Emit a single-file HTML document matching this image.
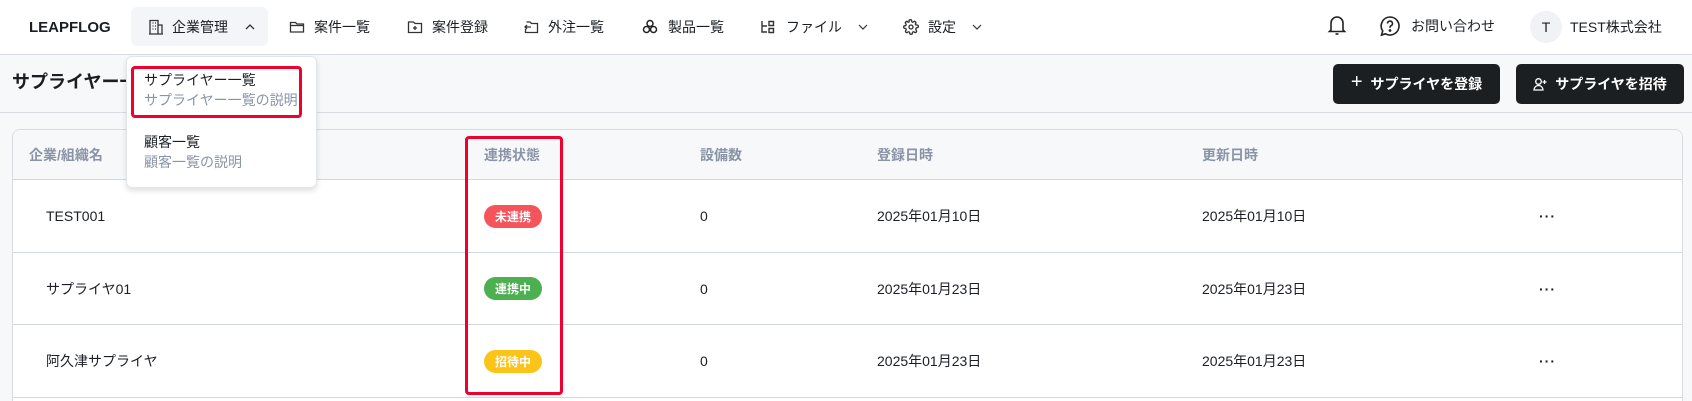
<!DOCTYPE html>
<html style="width:1692px;height:401px;overflow:hidden"><head><meta charset="utf-8"><style>
*{box-sizing:border-box;margin:0;padding:0}
body{width:1692px;height:401px;overflow:hidden;background:#f7f8fa;font-family:"Liberation Sans","Noto Sans CJK JP",sans-serif;color:#1b1f24;font-size:14px;position:relative}
.abs{position:absolute}
.hdr{position:absolute;left:0;top:0;width:1692px;height:55px;background:#fff;border-bottom:1px solid #d8dce2}
.nav{position:absolute;top:0;height:54px;display:flex;align-items:center;font-size:14px;color:#1b1f24}
svg{display:block}
.ptitle{position:absolute;left:12px;top:68px;font-size:18px;font-weight:bold}
.div{position:absolute;left:0;top:112px;width:1692px;border-top:1px solid #d8dce2}
.btn{position:absolute;top:64px;height:40px;background:#1c1f22;border-radius:5px;color:#fff;font-weight:bold;font-size:14px;display:flex;align-items:center;justify-content:center;gap:8px}
.card{position:absolute;left:12px;top:129px;width:1671px;height:272px;background:#fff;border:1px solid #d8dce2;border-bottom:none;border-radius:8px 8px 0 0;overflow:hidden}
.th{position:absolute;left:0;top:0;width:100%;height:50px;background:#f7f8fa;border-bottom:1px solid #d3d8df}
.row{position:absolute;left:0;width:100%;border-bottom:1px solid #d3d8df}
.c{position:absolute;top:0;height:100%;display:flex;align-items:center}
.h{color:#8a94a6;font-weight:bold;font-size:14px}
.badge{height:23px;width:58px;border-radius:12px;color:#fff;font-size:12px;font-weight:bold;display:flex;align-items:center;justify-content:center}
.dd{position:absolute;left:126px;top:56px;width:191px;height:132px;background:#fff;border:1px solid #e2e5ea;border-radius:6px;box-shadow:0 3px 6px rgba(0,0,0,.12)}
.red{position:absolute;border:3px solid #f0002e;border-radius:4px}
</style></head><body>
<div class="hdr"></div>
<div class="abs" style="left:29px;top:19px;font-weight:bold;font-size:15px">LEAPFLOG</div>
<div class="abs" style="left:131px;top:7px;width:137px;height:39px;background:#f3f5f8;border-radius:6px"></div>
<div class="nav" style="left:148px;gap:8px"><svg width="16" height="16" viewBox="0 0 16 16" fill="none" stroke="#333" stroke-width="1.3"><path d="M2 15V1.5h8V15M10 6h4v9M1 15h14M4.5 4h1M7 4h1M4.5 7h1M7 7h1M4.5 10h1M7 10h1"/></svg><span>企業管理</span><svg width="12" height="12" viewBox="0 0 12 12" fill="none" stroke="#333" stroke-width="1.3" style="margin-left:8px"><path d="M2 8l4-4 4 4"/></svg></div>
<div class="nav" style="left:289px;gap:9px"><svg width="16" height="16" viewBox="0 0 16 16" fill="none" stroke="#333" stroke-width="1.3"><path d="M1.5 3.5h5l1.5 1.5h6.5v8h-13z"/><path d="M1.5 6.5h13"/></svg><span>案件一覧</span></div>
<div class="nav" style="left:407px;gap:9px"><svg width="16" height="16" viewBox="0 0 16 16" fill="none" stroke="#333" stroke-width="1.3"><path d="M1.5 3h5l1.5 1.5h6.5v9h-13z"/><path d="M8 7v4M6 9h4"/></svg><span>案件登録</span></div>
<div class="nav" style="left:523px;gap:9px"><svg width="16" height="16" viewBox="0 0 16 16" fill="none" stroke="#333" stroke-width="1.3"><path d="M4 3.5V3h3l1.5 1.5h6v9h-12V10"/><path d="M8 8H2M4 6L2 8l2 2"/></svg><span>外注一覧</span></div>
<div class="nav" style="left:642px;gap:10px"><svg width="16" height="16" viewBox="0 0 16 16" fill="none" stroke="#222" stroke-width="1.5"><circle cx="8" cy="4.5" r="3"/><circle cx="4.5" cy="10.5" r="3"/><circle cx="11.5" cy="10.5" r="3"/></svg><span>製品一覧</span></div>
<div class="nav" style="left:760px;gap:10px"><svg width="16" height="16" viewBox="0 0 16 16" fill="none" stroke="#333" stroke-width="1.4"><path d="M2 2v11h5M2 7h5M9 2.5h4.5v4H9zM9 9.5h4.5v4H9z"/></svg><span>ファイル</span><svg width="12" height="12" viewBox="0 0 12 12" fill="none" stroke="#333" stroke-width="1.2" style="margin-left:5px"><path d="M2 4l4 4 4-4"/></svg></div>
<div class="nav" style="left:903px;gap:9px"><svg width="16" height="16" viewBox="0 0 24 24" fill="none" stroke="#333" stroke-width="2"><circle cx="12" cy="12" r="3"/><path d="M19.4 15a1.65 1.65 0 0 0 .33 1.82l.06.06a2 2 0 1 1-2.83 2.83l-.06-.06a1.65 1.65 0 0 0-2.82 1.17V21a2 2 0 1 1-4 0v-.09A1.65 1.65 0 0 0 9 19.4a1.65 1.65 0 0 0-1.82.33l-.06.06a2 2 0 1 1-2.83-2.83l.06-.06A1.65 1.65 0 0 0 3 14.08H3a2 2 0 1 1 0-4h.09A1.65 1.65 0 0 0 4.6 9a1.65 1.65 0 0 0-.33-1.82l-.06-.06a2 2 0 1 1 2.83-2.83l.06.06A1.65 1.65 0 0 0 9 4.6V3a2 2 0 1 1 4 0v.09a1.65 1.65 0 0 0 2.82 1.17l.06-.06a2 2 0 1 1 2.83 2.83l-.06.06A1.65 1.65 0 0 0 19.4 9H21a2 2 0 1 1 0 4h-.09a1.65 1.65 0 0 0-1.51 1z"/></svg><span>設定</span><svg width="12" height="12" viewBox="0 0 12 12" fill="none" stroke="#333" stroke-width="1.2" style="margin-left:6px"><path d="M2 4l4 4 4-4"/></svg></div>
<svg class="abs" style="left:1327px;top:14px" width="20" height="22" viewBox="0 0 20 22" fill="none" stroke="#222" stroke-width="1.6"><path d="M4 16V9a6 6 0 0 1 12 0v7l1.5 1.5h-15z"/><path d="M8.5 20h3"/></svg>
<svg class="abs" style="left:1379px;top:15px" width="22" height="22" viewBox="0 0 22 22" fill="none" stroke="#222" stroke-width="1.6"><path d="M11 2a9 9 0 1 1-4.5 16.8L2.5 20l1.2-4A9 9 0 0 1 11 2z"/><path d="M8.5 8.5a2.5 2.5 0 1 1 3.3 2.4c-.6.3-.8.8-.8 1.4v.5"/><circle cx="11" cy="15.5" r=".6" fill="#222"/></svg>
<div class="abs" style="left:1411px;top:16px;font-size:14px">お問い合わせ</div>
<div class="abs" style="left:1530px;top:11px;width:32px;height:32px;border-radius:50%;background:#f0f2f5;display:flex;align-items:center;justify-content:center;font-size:14px">T</div>
<div class="abs" style="left:1570px;top:17px;font-size:14px">TEST株式会社</div>

<div class="ptitle">サプライヤー一覧</div>
<div class="div"></div>
<div class="btn" style="left:1333px;width:167px"><span style="font-size:20px;font-weight:normal;margin-top:-3px">+</span><span>サプライヤを登録</span></div>
<div class="btn" style="left:1516px;width:168px"><svg width="14" height="14" viewBox="0 0 14 14" fill="none" stroke="#fff" stroke-width="1.3"><circle cx="5.5" cy="4.5" r="2.8"/><path d="M1 13a4.5 4.5 0 0 1 9 0zM11.5 3v4M9.5 5h4"/></svg><span>サプライヤを招待</span></div>

<div class="card">
 <div class="th">
  <div class="c h" style="left:16px">企業/組織名</div>
  <div class="c h" style="left:471px">連携状態</div>
  <div class="c h" style="left:687px">設備数</div>
  <div class="c h" style="left:864px">登録日時</div>
  <div class="c h" style="left:1189px">更新日時</div>
 </div>
 <div class="row" style="top:50px;height:73px">
  <div class="c" style="left:33px">TEST001</div>
  <div class="c" style="left:471px"><div class="badge" style="background:#f4545a">未連携</div></div>
  <div class="c" style="left:687px">0</div>
  <div class="c" style="left:864px">2025年01月10日</div>
  <div class="c" style="left:1189px">2025年01月10日</div>
  <div class="c" style="left:1526px;font-weight:bold;letter-spacing:1px">···</div>
 </div>
 <div class="row" style="top:123px;height:72px">
  <div class="c" style="left:33px">サプライヤ01</div>
  <div class="c" style="left:471px"><div class="badge" style="background:#4caf50">連携中</div></div>
  <div class="c" style="left:687px">0</div>
  <div class="c" style="left:864px">2025年01月23日</div>
  <div class="c" style="left:1189px">2025年01月23日</div>
  <div class="c" style="left:1526px;font-weight:bold;letter-spacing:1px">···</div>
 </div>
 <div class="row" style="top:195px;height:73px">
  <div class="c" style="left:33px">阿久津サプライヤ</div>
  <div class="c" style="left:471px"><div class="badge" style="background:#fcc419">招待中</div></div>
  <div class="c" style="left:687px">0</div>
  <div class="c" style="left:864px">2025年01月23日</div>
  <div class="c" style="left:1189px">2025年01月23日</div>
  <div class="c" style="left:1526px;font-weight:bold;letter-spacing:1px">···</div>
 </div>
</div>
<div class="red" style="left:465px;top:136px;width:98px;height:259px"></div>

<div class="dd">
 <div class="abs" style="left:17px;top:13px;font-size:14px">サプライヤー一覧</div>
 <div class="abs" style="left:17px;top:33px;font-size:14px;color:#8a94a6">サプライヤー一覧の説明</div>
 <div class="abs" style="left:17px;top:75px;font-size:14px">顧客一覧</div>
 <div class="abs" style="left:17px;top:95px;font-size:14px;color:#8a94a6">顧客一覧の説明</div>
</div>
<div class="red" style="left:131px;top:66px;width:171px;height:52px"></div>
</body></html>
